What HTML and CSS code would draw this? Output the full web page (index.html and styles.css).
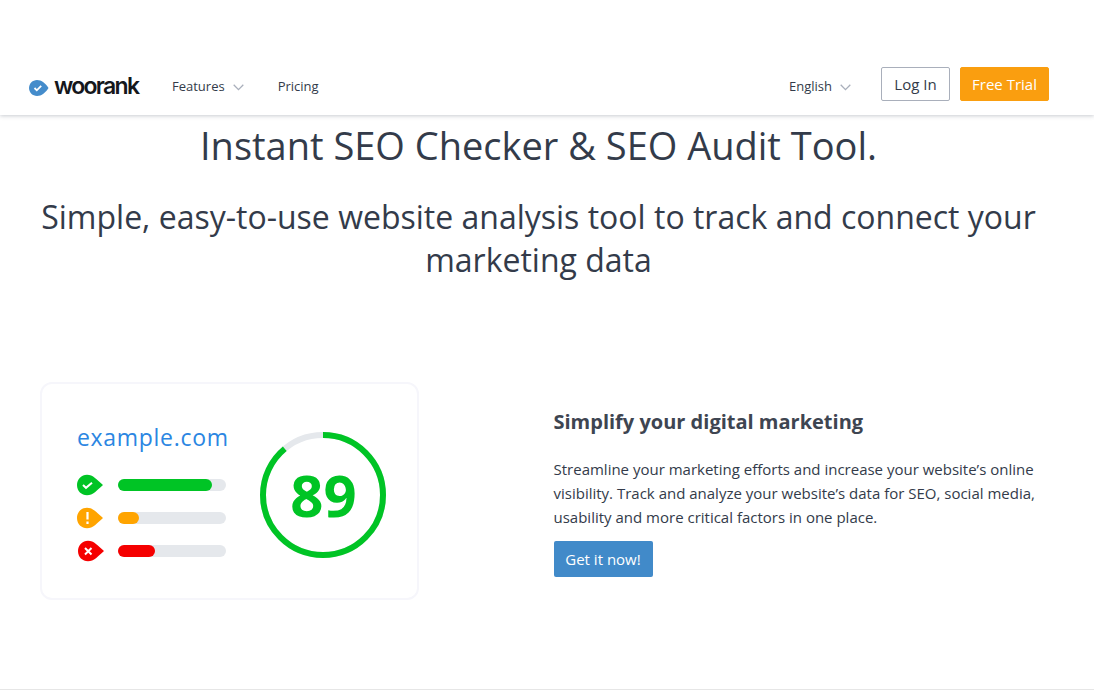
FILE: index.html
```html
<!DOCTYPE html>
<html lang="en">

<head>
    <meta charset="UTF-8">
    <meta name="viewport" content="width=device-width, initial-scale=1.0">
    <title>WooRank - Instant SEO Checker</title>
    <link rel="stylesheet" href="styles.css">
</head>

<body>
    <header class="topbar">
        <a class="logo" href="#">
            <svg class="logo-mark" width="20" height="16" viewBox="0 0 20 16">
                <path d="M0 8C0 3.6 3.6 0 8 0c4.600 0 8.500 3.500 11.500 8C16.500 12.500 12.600 16 8 16 3.600 16 0 12.400 0 8z" fill="#448ccb" />
                <path d="M5.500 8l2.300 2.300 4.400-4.500" fill="none" stroke="#fff" stroke-width="1.800" />
            </svg>
            <span class="logo-text">woorank</span>
        </a>
        <nav class="nav">
            <a class="nav-link" href="#">Features
                <svg class="chevron" width="11" height="7" viewBox="0 0 11 7">
                    <path d="M.7.8l4.800 4.800L10.300.8" fill="none" stroke="#a9afbb" stroke-width="1.300" />
                </svg>
            </a>
            <a class="nav-link" href="#">Pricing</a>
        </nav>
        <div class="actions">
            <a class="nav-link lang" href="#">English
                <svg class="chevron" width="11" height="7" viewBox="0 0 11 7">
                    <path d="M.7.8l4.800 4.800L10.300.8" fill="none" stroke="#a9afbb" stroke-width="1.300" />
                </svg>
            </a>
            <a class="btn btn-login" href="#">Log In</a>
            <a class="btn btn-trial" href="#">Free Trial</a>
        </div>
    </header>

    <main>
        <section class="hero">
            <h1>Instant SEO Checker &amp; SEO Audit Tool.</h1>
            <h2>Simple, easy-to-use website analysis tool to track and connect your marketing data</h2>
        </section>

        <section class="feature">
            <div class="card">
                <div class="card-left">
                    <div class="domain">example.com</div>
                    <div class="meter">
                        <svg class="drop" width="28" height="22" viewBox="0 0 28 22">
                            <path d="M0 11C0 5 4.500 .7 10 .7c6 0 10 5 16 10.300C20 16.300 16 21.300 10 21.300 4.500 21.300 0 17 0 11z" fill="#00c425" />
                            <path d="M6 11l3 2.800 6-5" fill="none" stroke="#fff" stroke-width="2" />
                        </svg>
                        <div class="track"><div class="fill fill-green" style="width: 87%"></div></div>
                    </div>
                    <div class="meter">
                        <svg class="drop" width="28" height="22" viewBox="0 0 28 22">
                            <path d="M0 11C0 5 4.500 .7 10 .7c6 0 10 5 16 10.300C20 16.300 16 21.300 10 21.300 4.500 21.300 0 17 0 11z" fill="#ffa400" />
                            <path d="M10.500 5v7.500M10.500 14.500v2.500" fill="none" stroke="#fff" stroke-width="2.200" />
                        </svg>
                        <div class="track"><div class="fill fill-orange" style="width: 19.500%"></div></div>
                    </div>
                    <div class="meter">
                        <svg class="drop" width="28" height="22" viewBox="0 0 28 22">
                            <path d="M1 11C1 5 5.500 .7 11 .7c6 0 10 5 16 10.300C21 16.300 17 21.300 11 21.300 5.500 21.300 1 17 1 11z" fill="#f50000" />
                            <path d="M8 8l6.500 6.500M14.500 8L8 14.500" fill="none" stroke="#fff" stroke-width="2" />
                        </svg>
                        <div class="track"><div class="fill fill-red" style="width: 34%"></div></div>
                    </div>
                </div>
                <div class="score">
                    <svg width="126" height="126" viewBox="0 0 126 126">
                        <circle cx="63" cy="63" r="60" fill="none" stroke="#e5e8ec" stroke-width="6" />
                        <circle class="score-arc" cx="63" cy="63" r="60" fill="none" stroke="#00c425" stroke-width="6" pathLength="100" stroke-dasharray="89 100" />
                    </svg>
                    <span class="score-num">89</span>
                </div>
            </div>
            <div class="copy">
                <h3>Simplify your digital marketing</h3>
                <p>Streamline your marketing efforts and increase your website’s online visibility. Track and analyze your website’s data for SEO, social media, usability and more critical factors in one place.</p>
                <a class="btn-cta" href="#">Get it now!</a>
            </div>
        </section>
    </main>

    <footer class="foot"></footer>
</body>

</html>
```
FILE: styles.css
```css
body {
    font-family: "Open Sans", sans-serif;
    color: #333b4a;
    margin: 0;
    height: 690px;
    overflow: hidden;
    background: #fff;
    display: flex;
    flex-direction: column;
}

a {
    text-decoration: none;
    color: inherit;
}

.topbar {
    height: 115px;
    box-sizing: border-box;
    padding: 66px 45px 0 29px;
    display: flex;
    align-items: flex-start;
    box-shadow: 0 1px 4px rgba(40, 50, 70, 0.25);
}

.logo {
    display: flex;
    align-items: center;
    height: 40px;
    width: 143px;
}

.logo-mark {
    margin-top: 3px;
}

.logo-text {
    font-family: Inter, sans-serif;
    font-weight: 600;
    font-size: 23px;
    letter-spacing: -1.7px;
    color: #15171c;
    margin-left: 5px;
}

.nav {
    display: flex;
    gap: 34px;
}

.nav-link {
    font-size: 13px;
    line-height: 40px;
    display: flex;
    align-items: center;
    gap: 8px;
}

.actions {
    margin-left: auto;
    margin-top: 1px;
    display: flex;
    gap: 10px;
}

.lang {
    margin-right: 20px;
    margin-top: -1px;
}

.chevron {
    margin-top: 2px;
}

.btn {
    height: 34px;
    box-sizing: border-box;
    border-radius: 2px;
    font-size: 15px;
    line-height: 32px;
    text-align: center;
}

.btn-login {
    width: 69px;
    border: 1px solid #a9afbb;
}

.btn-trial {
    width: 89px;
    background: #fa9e0f;
    border: 1px solid #fa9e0f;
    color: #fff;
}

main {
    flex: 1;
}

.hero {
    width: 1077px;
    box-sizing: border-box;
    padding: 5px 40px 0;
    text-align: center;
}

h1 {
    font-size: 38px;
    line-height: 50px;
    font-weight: 400;
    margin: 0 0 25px;
}

h2 {
    font-size: 32px;
    line-height: 43px;
    font-weight: 400;
    margin: 0;
}

.feature {
    display: flex;
    padding: 101px 0 0 40px;
}

.card {
    width: 379px;
    height: 218px;
    box-sizing: border-box;
    border: 2px solid #f6f6fb;
    border-radius: 12px;
    padding: 38px 31px 0 35px;
    display: flex;
    justify-content: space-between;
}

.domain {
    font-size: 23px;
    line-height: 30px;
    letter-spacing: 0.7px;
    color: #2b86e2;
    margin-bottom: 22px;
}

.meter {
    display: flex;
    align-items: center;
    height: 22px;
    margin-bottom: 11px;
}

.drop {
    margin-right: 13px;
}

.track {
    width: 108px;
    height: 12px;
    border-radius: 6px;
    background: #e5e8ec;
}

.fill {
    height: 100%;
    border-radius: 6px;
}

.fill-green {
    background: #00c425;
}

.fill-orange {
    background: #ffa400;
}

.fill-red {
    background: #f50000;
}

.score {
    position: relative;
    width: 126px;
    height: 126px;
    margin-top: 10px;
}

.score-arc {
    transform: rotate(-90deg);
    transform-origin: center;
}

.score-num {
    position: absolute;
    inset: 0;
    padding-left: 1px;
    text-align: center;
    font-size: 58px;
    font-weight: 700;
    line-height: 126px;
    color: #00c425;
}

.copy {
    margin-left: 134.500px;
    width: 490px;
    padding-top: 26px;
}

h3 {
    font-size: 20px;
    line-height: 28px;
    font-weight: 700;
    color: #3e4551;
    margin: 0 0 21px;
}

p {
    font-size: 15px;
    line-height: 24px;
    margin: 0 0 12px;
}

.btn-cta {
    display: block;
    width: 99px;
    height: 36px;
    border-radius: 2px;
    background: #418ac9;
    color: #fff;
    font-size: 15px;
    line-height: 36px;
    text-align: center;
}

.foot {
    height: 1px;
    background: #e6e6e6;
}
```
